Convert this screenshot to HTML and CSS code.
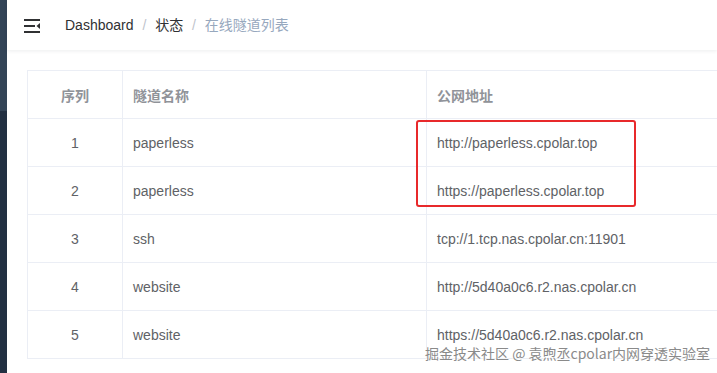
FILE: index.html
```html
<!DOCTYPE html>
<html lang="zh-CN">
<head>
    <meta charset="UTF-8">
    <title>在线隧道列表</title>
    <link rel="stylesheet" href="styles.css">
</head>
<body>
    <div class="app-wrapper">
        <div class="sidebar">
            <div class="sidebar-logo"></div>
        </div>
        <div class="main-container">
            <div class="navbar">
                <div class="hamburger">
                    <svg width="17" height="14" viewBox="0 0 17 14">
                        <rect x="0" y="0" width="16" height="2" fill="#303133"/>
                        <rect x="0" y="6" width="11" height="2" fill="#303133"/>
                        <rect x="0" y="12" width="16" height="2" fill="#303133"/>
                        <path d="M16 4 L12.5 7 L16 10 Z" fill="#303133"/>
                    </svg>
                </div>
                <div class="breadcrumb">
                    <span class="crumb">Dashboard</span>
                    <span class="sep">/</span>
                    <span class="crumb">状态</span>
                    <span class="sep">/</span>
                    <span class="crumb current">在线隧道列表</span>
                </div>
            </div>
            <div class="app-main">
                <table class="tunnel-table">
                    <thead>
                        <tr>
                            <th class="col-index">序列</th>
                            <th class="col-name">隧道名称</th>
                            <th>公网地址</th>
                        </tr>
                    </thead>
                    <tbody>
                        <tr><td class="col-index">1</td><td>paperless</td><td>http://paperless.cpolar.top</td></tr>
                        <tr><td class="col-index">2</td><td>paperless</td><td>https://paperless.cpolar.top</td></tr>
                        <tr><td class="col-index">3</td><td>ssh</td><td>tcp://1.tcp.nas.cpolar.cn:11901</td></tr>
                        <tr><td class="col-index">4</td><td>website</td><td>http://5d40a0c6.r2.nas.cpolar.cn</td></tr>
                        <tr><td class="col-index">5</td><td>website</td><td>https://5d40a0c6.r2.nas.cpolar.cn</td></tr>
                    </tbody>
                </table>
                <div class="highlight-box"></div>
            </div>
        </div>
    </div>
    <div class="watermark">掘金技术社区 @ 袁煦丞cpolar内网穿透实验室</div>
</body>
</html>
```

FILE: styles.css
```css
body {
    margin: 0;
    font-family: "Liberation Sans", Arial, "Noto Sans CJK SC", sans-serif;
    font-size: 14px;
    color: #606266;
    overflow: hidden;
    height: 373px;
}

.app-wrapper {
    display: flex;
    height: 373px;
}

.sidebar {
    width: 7px;
    flex-shrink: 0;
    background: #223042;
}

.sidebar-logo {
    height: 111px;
    background: #334457;
}

.main-container {
    flex: 1;
    min-width: 0;
    background: #fff;
}

.navbar {
    height: 50px;
    display: flex;
    align-items: center;
    box-shadow: 0 1px 4px rgba(0, 21, 41, 0.08);
    position: relative;
}

.hamburger {
    padding: 0 0 0 17px;
    width: 41px;
    display: flex;
    align-items: center;
    height: 50px;
    margin-top: 1px;
}

.breadcrumb {
    font-size: 14px;
    margin-top: -3px;
}

.crumb {
    color: #303133;
}

.crumb.current {
    color: #97a8be;
}

.sep {
    color: #c0c4cc;
    margin: 0 5px;
}

/* table area */
.app-main {
    padding: 20px;
    position: relative;
}

.tunnel-table {
    width: 800px;
    border-collapse: collapse;
    border-top: 1px solid #ebeef5;
    border-left: 1px solid #ebeef5;
}

.tunnel-table th,
.tunnel-table td {
    height: 47px;
    padding: 0 10px;
    text-align: left;
    border-right: 1px solid #ebeef5;
    border-bottom: 1px solid #ebeef5;
}

.tunnel-table th {
    color: #909399;
    font-weight: bold;
    height: 47px;
}

.tunnel-table .col-index {
    width: 74px;
    text-align: center;
}

.tunnel-table .col-name {
    width: 283px;
}

.highlight-box {
    position: absolute;
    left: 409px;
    top: 70px;
    width: 216px;
    height: 83px;
    border: 2px solid #e8292b;
    border-radius: 3px;
}

.watermark {
    position: absolute;
    left: 425px;
    top: 343px;
    font-size: 14px;
    white-space: nowrap;
    color: #8a8a8a;
    text-shadow: 0 0 2px #fff, 0 0 2px #fff;
    font-family: "Noto Sans CJK SC", sans-serif;
    line-height: 20px;
}
```
